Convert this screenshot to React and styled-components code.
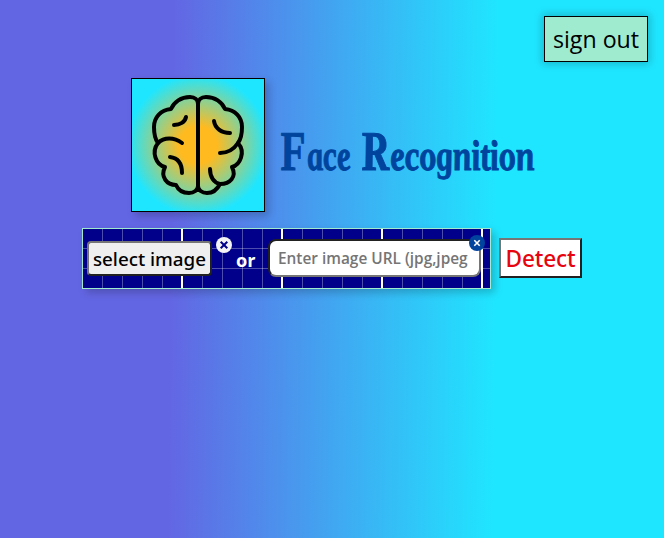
import React from "react";
import styled, { createGlobalStyle } from "styled-components";

const ui = '"Open Sans", "Noto Sans", sans-serif';

const Global = createGlobalStyle`
  * { box-sizing: border-box; }
  body { margin: 0; font-family: ${ui}; }
`;

const Page = styled.main`
  height: 100vh;
  overflow: hidden;
  background: linear-gradient(90.6deg, #6366e3 26%, #1fe6ff 74.5%);
`;

const Nav = styled.nav`
  display: flex;
  justify-content: flex-end;
  padding: 16px 16px 0 0;
`;

const SignOut = styled.button`
  width: 104px;
  height: 46px;
  padding: 0;
  border: 1px solid #000;
  background: #9eebcf;
  box-shadow: 0 0 8px 2px rgba(0, 0, 0, 0.2);
  font: 400 23.2px ${ui};
  color: #000;
  white-space: nowrap;
`;

const Brand = styled.header`
  display: flex;
  align-items: flex-start;
  margin: 16px 0 0 131px;
  height: 134px;
`;

const Logo = styled.div`
  width: 134px;
  height: 134px;
  flex: none;
  border: 1px solid #000;
  background: radial-gradient(circle, #ffba20 20%, #1fe6ff 75%);
  box-shadow: 4px 4px 8px 0 rgba(0, 0, 0, 0.2);

  svg { display: block; }
`;

const Title = styled.h1`
  display: flex;
  gap: 10px;
  margin: 43px 0 0 16px;
  font: italic 700 43px/60px "Liberation Serif", serif;
  color: #00449e;
  white-space: nowrap;
`;

const Word = styled.span`
  display: block;
  width: ${(p) => p.$width}px;
  transform: skewX(7deg) scaleX(${(p) => p.$scale});
  transform-origin: left 70%;
  -webkit-text-stroke: 1px #00449e;

  &::first-letter { font-size: 56px; line-height: 60px; }
`;

const FormRow = styled.section`
  display: flex;
  align-items: flex-start;
  margin: 16px 0 0 82px;
`;

const Panel = styled.div`
  display: flex;
  width: 409px;
  height: 61px;
  border: 1px solid #9eebcf;
  background-color: #00008b;
  background-image:
    linear-gradient(#fff 2px, transparent 2px),
    linear-gradient(90deg, #fff 2px, transparent 2px),
    linear-gradient(rgba(255, 255, 255, 0.3) 1px, transparent 1px),
    linear-gradient(90deg, rgba(255, 255, 255, 0.3) 1px, transparent 1px);
  background-size: 100px 100px, 100px 100px, 20px 20px, 20px 20px;
  background-position: -2px -2px, -2px -2px, -1px -1px, -1px -1px;
  box-shadow: 4px 4px 8px 0 rgba(0, 0, 0, 0.2);
`;

const SelectButton = styled.button`
  width: 125px;
  height: 35px;
  margin: 12px 0 0 4px;
  padding: 1px 0 0;
  border: 2px solid;
  border-color: #767676 #212121 #212121 #767676;
  border-radius: 4px;
  background: #efefef;
  font: 500 18.8px "Noto Sans", sans-serif;
  color: #000;
  white-space: nowrap;
`;

const ClearIcon = styled.svg`
  width: 16px;
  height: 16px;
  margin: 8px 0 0 4px;
  flex: none;
`;

const Or = styled.span`
  width: 21px;
  margin: 18px 0 0 4px;
  font: 700 18.2px/26px ${ui};
  color: #fff;
`;

const Field = styled.div`
  position: relative;
  margin: 10px 0 0 11px;
`;

const UrlInput = styled.input`
  display: block;
  width: 213px;
  height: 38px;
  padding: 0 8px;
  border: 2px solid;
  border-color: #212121 #767676 #767676 #212121;
  border-radius: 8px;
  background: #fff;
  font: 600 15.4px ${ui};

  &::placeholder { color: #757575; }
`;

const FieldClear = styled.svg`
  position: absolute;
  top: -4px;
  right: -4px;
  width: 16px;
  height: 16px;
`;

const Detect = styled.button`
  width: 83px;
  height: 40px;
  margin: 10px 0 0 8px;
  padding: 0;
  border: 2px solid;
  border-color: #767676 #212121 #212121 #767676;
  background: #fff;
  font: 500 22.6px "Noto Sans", sans-serif;
  letter-spacing: -0.15px;
  color: #e7040f;
  white-space: nowrap;
`;

function Brain() {
  return (
    <svg width="132" height="132" viewBox="132 79 132 132" fill="none" stroke="#000" strokeWidth="4" strokeLinecap="round" strokeLinejoin="round">
      <path d="M198 102v88M198 104c0-4-3-7-8-7-9 0-16 5-19 12-10 1-17 8-17 18 0 7 1 12 4 16-7 9-2 22 7 24-5 10 2 18 11 18 3 7 8 8 13 8 5 0 9-3 9-7M198 104c0-4 3-7 8-7 9 0 16 5 19 12 10 1 17 8 17 18 0 7-1 12-4 16 8 9 2 22-6 24 5 10-2 17-12 17-3 6-8 9-13 9-5 0-9-3-9-7" />
      <path d="M174 125c6 0 11-3 12-8M214 121c1 7 7 12 16 12M158 143c6-6 16-6 24 0M170 157c8 1 12 7 12 16M238 143c-4 6-10 10-18 10M210 169c0 8 4 14 10 15" />
    </svg>
  );
}

export default function App() {
  return (
    <Page>
      <Global />
      <Nav><SignOut>sign out</SignOut></Nav>
      <Brand>
        <Logo><Brain /></Logo>
        <Title>
          <Word $width={71} $scale={0.73}>Face</Word>
          <Word $width={172} $scale={0.775}>Recognition</Word>
        </Title>
      </Brand>
      <FormRow>
        <Panel>
          <SelectButton>select image</SelectButton>
          <ClearIcon viewBox="0 0 16 16">
            <circle cx="8" cy="8" r="8" fill="#f4f4f4" />
            <path d="M4.7 4.7l6.6 6.6M11.3 4.7l-6.6 6.6" stroke="#00008b" strokeWidth="2" />
          </ClearIcon>
          <Or>or</Or>
          <Field>
            <UrlInput placeholder="Enter image URL (jpg,jpeg" />
            <FieldClear viewBox="0 0 16 16">
              <circle cx="8" cy="8" r="8" fill="#00449e" />
              <path d="M5.3 5.3l5.4 5.4M10.7 5.3l-5.4 5.4" stroke="#fff" strokeWidth="1.6" />
            </FieldClear>
          </Field>
        </Panel>
        <Detect>Detect</Detect>
      </FormRow>
    </Page>
  );
}
